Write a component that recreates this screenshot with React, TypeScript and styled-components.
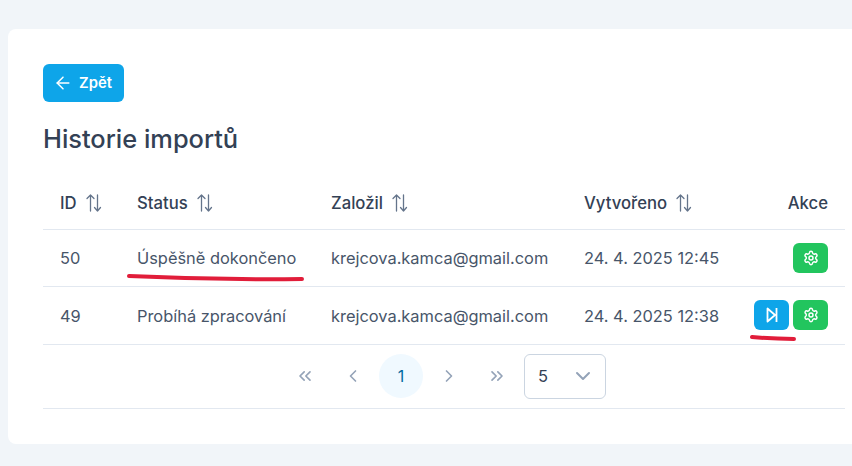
import { createGlobalStyle } from "styled-components";
import styled from "styled-components";
import { ArrowLeft, ChevronDown, ChevronLeft, ChevronRight, ChevronsLeft, ChevronsRight, Settings } from "lucide-react";

const GlobalStyle = createGlobalStyle`
  html, body {
    margin: 0;
    padding: 0;
    background: #f1f5f9;
    overflow: hidden;
  }
  body {
    font-family: "Inter", "Noto Sans", sans-serif;
    color: #334155;
  }
`;

const Page = styled.div`
  width: 852px;
  height: 466px;
  padding: 29px 0 22px 8px;
  box-sizing: border-box;
  overflow: hidden;
  position: relative;
`;

const Card = styled.div`
  width: 860px;
  height: 415px;
  box-sizing: border-box;
  background: #fff;
  border-radius: 8px;
  padding: 35px 0 0 35px;
`;

const BackButton = styled.button`
  display: flex;
  align-items: center;
  gap: 6px;
  width: 81px;
  height: 38px;
  padding: 0 0 0 10px;
  box-sizing: border-box;
  border: 0;
  border-radius: 6px;
  background: #0ea5e9;
  color: #fff;
  font: 600 14.8px "Inter", sans-serif;
`;

const Title = styled.h1`
  margin: 20px 0 0;
  font-size: 25.4px;
  line-height: 34px;
  font-weight: 500;
  color: #334155;
`;

const Table = styled.table`
  width: 802px;
  margin-top: 19px;
  border-collapse: collapse;
  table-layout: fixed;
`;

const Head = styled.th<{ $w: number; $right?: boolean }>`
  width: ${(p) => p.$w}px;
  height: 54px;
  padding: 2px 17px 0;
  box-sizing: border-box;
  text-align: ${(p) => (p.$right ? "right" : "left")};
  font-size: 16.7px;
  font-weight: 500;
  color: #334155;
  border-bottom: 1px solid #e2e8f0;
`;

const HeadInner = styled.span`
  display: inline-flex;
  align-items: center;
  gap: 8px;
`;

const Cell = styled.td<{ $h: number; $actions?: boolean }>`
  height: ${(p) => p.$h}px;
  padding: ${(p) => (p.$actions ? "0 17px 0 0" : "1px 17px 0")};
  box-sizing: border-box;
  font-size: 16.4px;
  white-space: nowrap;
  color: #475569;
  border-bottom: 1px solid #e2e8f0;
`;

const Actions = styled.div`
  display: flex;
  justify-content: flex-end;
  gap: 4px;
`;

const ActionButton = styled.button<{ $bg: string }>`
  display: flex;
  flex: none;
  align-items: center;
  justify-content: center;
  width: 35px;
  height: 30px;
  padding: 0;
  border: 0;
  border-radius: 6px;
  background: ${(p) => p.$bg};
  color: #fff;
`;

const Pager = styled.div`
  display: flex;
  align-items: center;
  justify-content: center;
  width: 802px;
  height: 64px;
  padding-left: 1px;
  box-sizing: border-box;
  border-bottom: 1px solid #e2e8f0;
`;

const PageButton = styled.div<{ $active?: boolean }>`
  display: flex;
  align-items: center;
  justify-content: center;
  width: 44px;
  height: 44px;
  border-radius: 50%;
  margin-right: 4px;
  font-size: 16px;
  color: ${(p) => (p.$active ? "#0369a1" : "#94a3b8")};
  background: ${(p) => (p.$active ? "#f0f9ff" : "transparent")};
`;

const SizeSelect = styled.div`
  display: flex;
  align-items: center;
  justify-content: space-between;
  width: 82px;
  height: 45px;
  margin-left: 1px;
  padding: 0 10px 0 13px;
  box-sizing: border-box;
  border: 1px solid #cbd5e1;
  border-radius: 6px;
  font-size: 16.5px;
  color: #334155;
`;

// red pen marks drawn on top of the screenshot
const Marks = styled.svg`
  position: absolute;
  inset: 0;
  pointer-events: none;
`;

const SortIcon = () => (
  <svg width="18" height="18" viewBox="0 0 18 18" fill="none" stroke="#64748b" strokeWidth="1.3" strokeLinecap="round" strokeLinejoin="round">
    <path d="M5.5 17V1M2 4.5 5.5 1 9 4.5" />
    <path d="M12.5 1v16M9.5 13.5l3 3.5 3-3.5" />
  </svg>
);

const SkipIcon = () => (
  <svg width="18" height="18" viewBox="0 0 18 18" fill="none" stroke="#fff" strokeWidth="1.8" strokeLinejoin="round">
    <path d="M4.5 2.5v13L12 9zM13.5 2v14" />
  </svg>
);

const SortHead = ({ label, w }: { label: string; w: number }) => (
  <Head $w={w}>
    <HeadInner>
      {label}
      <SortIcon />
    </HeadInner>
  </Head>
);

const rows = [
  { id: 50, status: "Úspěšně dokončeno", user: "krejcova.kamca@gmail.com", created: "24. 4. 2025 12:45", skip: false, h: 57 },
  { id: 49, status: "Probíhá zpracování", user: "krejcova.kamca@gmail.com", created: "24. 4. 2025 12:38", skip: true, h: 58 },
];

export default function App() {
  return (
    <>
      <GlobalStyle />
      <Page>
        <Card>
          <BackButton>
            <ArrowLeft size={20} strokeWidth={1.8} />
            Zpět
          </BackButton>
          <Title>Historie importů</Title>
          <Table>
            <thead>
              <tr>
                <SortHead label="ID" w={77} />
                <SortHead label="Status" w={194} />
                <SortHead label="Založil" w={253} />
                <SortHead label="Vytvořeno" w={190} />
                <Head $w={88} $right>Akce</Head>
              </tr>
            </thead>
            <tbody>
              {rows.map((r) => (
                <tr key={r.id}>
                  <Cell $h={r.h}>{r.id}</Cell>
                  <Cell $h={r.h}>{r.status}</Cell>
                  <Cell $h={r.h}>{r.user}</Cell>
                  <Cell $h={r.h}>{r.created}</Cell>
                  <Cell $h={r.h} $actions>
                    <Actions>
                      {r.skip && (
                        <ActionButton $bg="#0ea5e9">
                          <SkipIcon />
                        </ActionButton>
                      )}
                      <ActionButton $bg="#22c55e">
                        <Settings size={16} strokeWidth={2.2} />
                      </ActionButton>
                    </Actions>
                  </Cell>
                </tr>
              ))}
            </tbody>
          </Table>
          <Pager>
            <PageButton><ChevronsLeft size={20} /></PageButton>
            <PageButton><ChevronLeft size={20} /></PageButton>
            <PageButton $active>1</PageButton>
            <PageButton><ChevronRight size={20} /></PageButton>
            <PageButton><ChevronsRight size={20} /></PageButton>
            <SizeSelect>
              5
              <ChevronDown size={24} color="#94a3b8" />
            </SizeSelect>
          </Pager>
        </Card>
        <Marks width="852" height="466" viewBox="0 0 852 466">
          <path d="M129 276 Q 215 280 302 279" fill="none" stroke="#e11d3a" strokeWidth="4" strokeLinecap="round" />
          <path d="M752 337 Q 772 339 794 339" fill="none" stroke="#e11d3a" strokeWidth="4" strokeLinecap="round" />
        </Marks>
      </Page>
    </>
  );
}
